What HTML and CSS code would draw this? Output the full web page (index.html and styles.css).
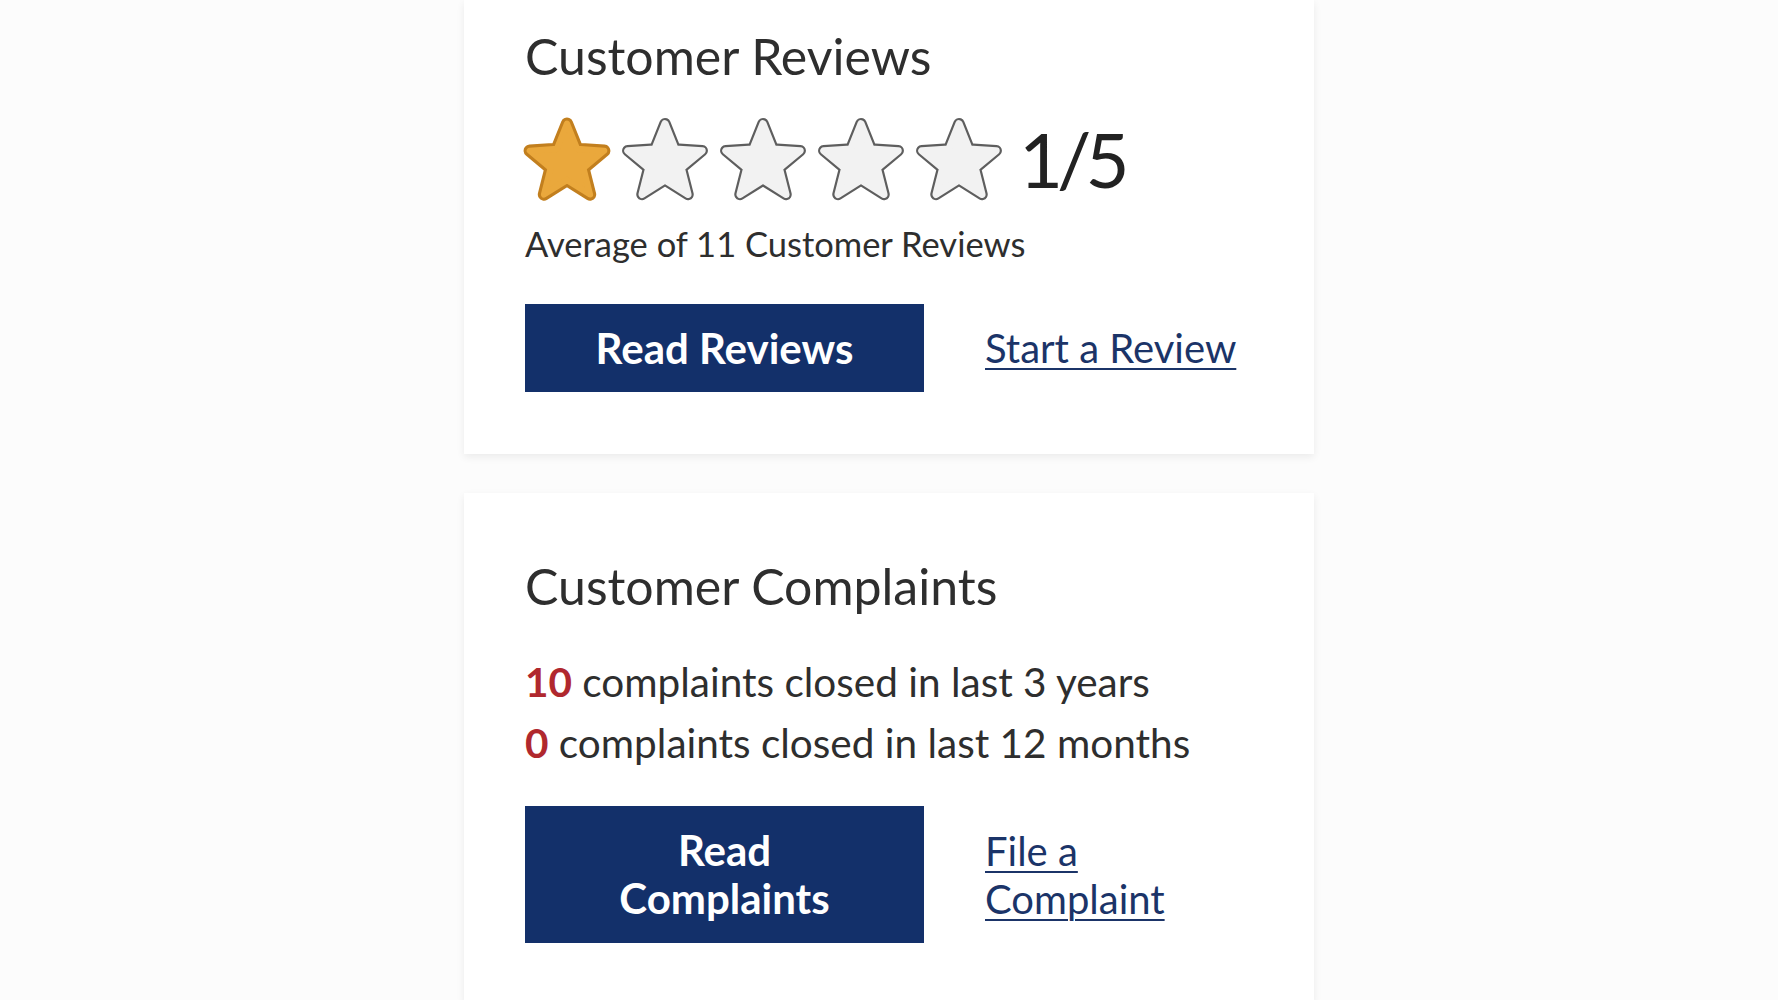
FILE: index.html
```html
<!DOCTYPE html>
<html lang="en">
<head>
<meta charset="utf-8">
<title>Customer Reviews</title>
<link rel="stylesheet" href="styles.css">
</head>
<body>
<main class="page">
  <section class="card card-reviews">
    <h2 class="card-title">Customer Reviews</h2>
    <div class="rating">
      <svg class="star star-on" viewBox="4 5 92 88" width="88" height="84"><polygon class="edge" points="50,12 60.58,38.44 88.99,40.33 67.12,58.56 74.10,86.17 50,71 25.90,86.17 32.88,58.56 11.01,40.33 39.42,38.44"/><polygon class="body" points="50,12 60.58,38.44 88.99,40.33 67.12,58.56 74.10,86.17 50,71 25.90,86.17 32.88,58.56 11.01,40.33 39.42,38.44"/></svg>
      <svg class="star star-off" viewBox="4 5 92 88" width="88" height="84"><polygon class="edge" points="50,12 60.58,38.44 88.99,40.33 67.12,58.56 74.10,86.17 50,71 25.90,86.17 32.88,58.56 11.01,40.33 39.42,38.44"/><polygon class="body" points="50,12 60.58,38.44 88.99,40.33 67.12,58.56 74.10,86.17 50,71 25.90,86.17 32.88,58.56 11.01,40.33 39.42,38.44"/></svg>
      <svg class="star star-off" viewBox="4 5 92 88" width="88" height="84"><polygon class="edge" points="50,12 60.58,38.44 88.99,40.33 67.12,58.56 74.10,86.17 50,71 25.90,86.17 32.88,58.56 11.01,40.33 39.42,38.44"/><polygon class="body" points="50,12 60.58,38.44 88.99,40.33 67.12,58.56 74.10,86.17 50,71 25.90,86.17 32.88,58.56 11.01,40.33 39.42,38.44"/></svg>
      <svg class="star star-off" viewBox="4 5 92 88" width="88" height="84"><polygon class="edge" points="50,12 60.58,38.44 88.99,40.33 67.12,58.56 74.10,86.17 50,71 25.90,86.17 32.88,58.56 11.01,40.33 39.42,38.44"/><polygon class="body" points="50,12 60.58,38.44 88.99,40.33 67.12,58.56 74.10,86.17 50,71 25.90,86.17 32.88,58.56 11.01,40.33 39.42,38.44"/></svg>
      <svg class="star star-off" viewBox="4 5 92 88" width="88" height="84"><polygon class="edge" points="50,12 60.58,38.44 88.99,40.33 67.12,58.56 74.10,86.17 50,71 25.90,86.17 32.88,58.56 11.01,40.33 39.42,38.44"/><polygon class="body" points="50,12 60.58,38.44 88.99,40.33 67.12,58.56 74.10,86.17 50,71 25.90,86.17 32.88,58.56 11.01,40.33 39.42,38.44"/></svg>
      <span class="score">1/5</span>
    </div>
    <p class="average">Average of 11 Customer Reviews</p>
    <div class="actions actions-reviews">
      <a class="btn" href="#">Read Reviews</a>
      <a class="link" href="#">Start a Review</a>
    </div>
  </section>

  <section class="card card-complaints">
    <h2 class="card-title">Customer Complaints</h2>
    <ul class="stats">
      <li><span class="count">10</span> complaints closed in last 3 years</li>
      <li><span class="count">0</span> complaints closed in last 12 months</li>
    </ul>
    <div class="actions actions-complaints">
      <a class="btn" href="#">Read Complaints</a>
      <a class="link" href="#">File a Complaint</a>
    </div>
  </section>
</main>
</body>
</html>
```

FILE: styles.css
```css
* { box-sizing: border-box; }

html, body {
  margin: 0;
  padding: 0;
  background: #fcfcfc;
  height: 1000px;
  overflow: hidden;
}

body {
  font-family: Lato, "Open Sans", "Liberation Sans", sans-serif;
  color: #2e2e2e;
}

.page {
  width: 850px;
  margin: 0 auto;
  display: flex;
  flex-direction: column;
  gap: 39px;
}

.card {
  background: #ffffff;
  box-shadow: 0 3px 8px rgba(0, 0, 0, 0.07);
  padding-left: 61px;
  padding-right: 61px;
}

.card-reviews {
  padding-top: 26px;
  padding-bottom: 62px;
}

.card-complaints {
  padding-top: 63px;
  padding-bottom: 60px;
}

.card-title {
  margin: 0;
  font-size: 50px;
  font-weight: 400;
  line-height: 60px;
  color: #2e2e2e;
}

.rating {
  margin-top: 31px;
  display: flex;
  align-items: center;
  gap: 10px;
  margin-left: -2px;
  height: 84px;
}

.star { display: block; flex: none; }
.star polygon { stroke-linejoin: round; }
.star-on .edge { fill: #c27f1e; stroke: #c27f1e; stroke-width: 13; }
.star-on .body { fill: #eaa83c; stroke: #eaa83c; stroke-width: 6.5; }
.star-off .edge { fill: #5e5e5e; stroke: #5e5e5e; stroke-width: 12; }
.star-off .body { fill: #f2f2f2; stroke: #f2f2f2; stroke-width: 7.4; }

.score {
  margin-left: 6px;
  font-size: 76px;
  line-height: 84px;
  font-weight: 400;
  color: #222;
  letter-spacing: -6px;
}

.average {
  margin: 23px 0 0;
  font-size: 34.5px;
  line-height: 40px;
}

.actions {
  display: grid;
  grid-template-columns: 399px 268px;
  column-gap: 61px;
  align-items: center;
}

.actions-reviews { margin-top: 40px; }
.actions-complaints { margin-top: 33px; }

.btn {
  display: block;
  background: #13306a;
  color: #ffffff;
  text-decoration: none;
  text-align: center;
  font-weight: 700;
  font-size: 42px;
  line-height: 48px;
  padding: 20px 62px;
}

.actions-complaints .btn { padding-top: 20px; padding-bottom: 21px; }

.link {
  color: #1b3468;
  font-size: 40px;
  line-height: 48px;
  text-decoration: underline;
  text-decoration-thickness: 2px;
  text-underline-offset: 5px;
}

.stats {
  list-style: none;
  margin: 35px 0 0;
  padding: 0;
  font-size: 40.5px;
  line-height: 61px;
}

.count {
  color: #b0282e;
  font-weight: 700;
}
```
